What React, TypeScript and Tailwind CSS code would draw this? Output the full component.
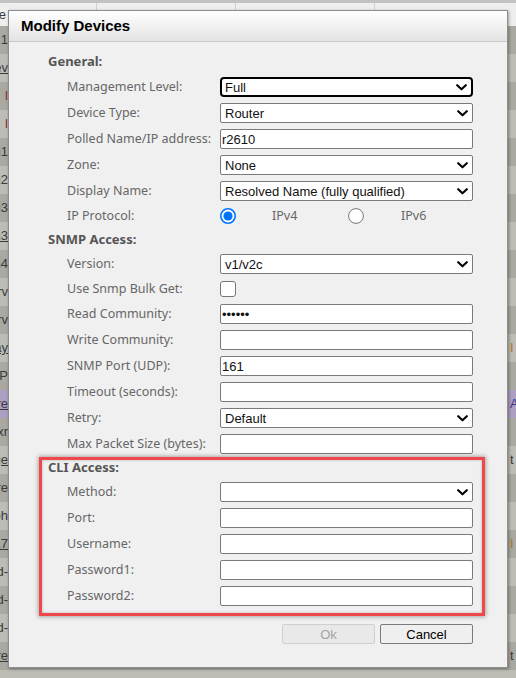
import clsx from "clsx";

type BgRow = {
  left: string;
  right?: string;
  tone: "dark" | "light" | "purple";
  link?: boolean;
  leftColor?: string;
  rightColor?: string;
};

// table rows peeking out behind the modal
const bgRows: BgRow[] = [
  { left: "eth0.1", tone: "dark" },
  { left: "sw-dev", tone: "light", link: true },
  { left: "l", tone: "dark", leftColor: "text-[#8a2b2b]" },
  { left: "l", tone: "light", leftColor: "text-[#8a2b2b]" },
  { left: "cisco-n1", tone: "dark" },
  { left: "cisco-n2", tone: "light" },
  { left: "cisco-n3", tone: "dark" },
  { left: "cisco-n3", tone: "light", link: true },
  { left: "cisco-n4", tone: "dark" },
  { left: "srv", tone: "light" },
  { left: "srv", tone: "dark" },
  { left: "gateway", tone: "light", link: true, right: "I", rightColor: "text-[#b8742a]" },
  { left: "AP", tone: "dark" },
  { left: "core", tone: "purple", link: true, right: "A", rightColor: "text-[#3b3b8a]" },
  { left: "xr", tone: "dark" },
  { left: "edge", tone: "light", link: true, right: "t" },
  { left: "fire", tone: "dark" },
  { left: "oh", tone: "light" },
  { left: "r17", tone: "dark", link: true, right: "I", rightColor: "text-[#b8742a]" },
  { left: "d-", tone: "light" },
  { left: "d-", tone: "dark" },
  { left: "d-", tone: "light" },
  { left: "store", tone: "dark", link: true, right: "t" },
  { left: "", tone: "light" },
];

const toneBg = {
  dark: "bg-[#a9a9a1]",
  light: "bg-[#bdbdb6]",
  purple: "bg-[#ac9fc2]",
};

function Backdrop() {
  return (
    <div className="flex flex-col font-['Liberation_Sans',Arial,sans-serif] text-[13px] text-[#3a3a3a]">
      <div className="h-[3px] bg-[#c2c2c2]" />
      <div className="flex h-[23px] bg-[#eeeeee]">
        <div className="flex w-[97px] items-center justify-end overflow-hidden border-r border-[#cfcfcf] pr-[90px]">
          <span className="whitespace-nowrap">Name</span>
        </div>
        <div className="w-[139px] border-r border-[#cfcfcf]" />
        <div className="w-[139px] border-r border-[#cfcfcf]" />
        <div className="flex-1" />
      </div>
      {bgRows.map((row, i) => (
        <div key={i} className={clsx("flex h-[28px] items-center", toneBg[row.tone])}>
          <div className="flex w-[8px] justify-end overflow-hidden">
            <span className={clsx("whitespace-nowrap", row.link && "underline", row.leftColor)}>{row.left}</span>
          </div>
          <div className="flex-1" />
          <div className="w-[8px] overflow-hidden pl-[2px]">
            <span className={clsx("whitespace-nowrap", row.rightColor)}>{row.right}</span>
          </div>
        </div>
      ))}
    </div>
  );
}

const fieldFont = "font-['Liberation_Sans',Arial,sans-serif] text-[13px] text-[#111]";

function Chevron() {
  return (
    <svg width="11" height="7" viewBox="0 0 11 7" fill="none">
      <path d="M1.2 1.2 L5.5 5.3 L9.8 1.2" stroke="#000" strokeWidth="2.1" strokeLinecap="round" strokeLinejoin="round" />
    </svg>
  );
}

function DropDown({ value, focused }: { value?: string; focused?: boolean }) {
  return (
    <div
      className={clsx(
        "flex h-[20px] w-[253px] items-center justify-between bg-white pr-[4px]",
        fieldFont,
        focused ? "rounded-[4px] border-2 border-black pl-[3px]" : "rounded-[2px] border border-[#7a7a7a] pl-[4px]"
      )}
    >
      <span className="leading-none">{value}</span>
      <Chevron />
    </div>
  );
}

function TextBox({ value, type = "text" }: { value?: string; type?: string }) {
  return (
    <input
      readOnly
      type={type}
      value={value ?? ""}
      className={clsx(
        "h-[20px] w-[253px] rounded-[2px] border border-[#7a7a7a] bg-white px-[1px] outline-none",
        fieldFont
      )}
    />
  );
}

function Radio({ checked }: { checked?: boolean }) {
  return (
    <svg width="16" height="16" viewBox="0 0 16 16">
      {checked ? (
        <>
          <circle cx="8" cy="8" r="7.2" fill="#fff" stroke="#0075ff" strokeWidth="1.6" />
          <circle cx="8" cy="8" r="4.6" fill="#0075ff" />
        </>
      ) : (
        <circle cx="8" cy="8" r="7.4" fill="#fff" stroke="#767676" strokeWidth="1" />
      )}
    </svg>
  );
}

function SectionTitle({ children, h }: { children: string; h: string }) {
  return (
    <div className={clsx("flex items-center text-[13px] font-bold text-[#555]", h)}>{children}</div>
  );
}

function Field({ label, children, h = "h-[26px]" }: { label: string; children: React.ReactNode; h?: string }) {
  return (
    <div className={clsx("flex items-center", h)}>
      <div className="w-[172px] pl-[19px] text-[12.5px] text-[#666]">{label}</div>
      {children}
    </div>
  );
}

export default function App() {
  return (
    <div className="relative h-[678px] w-[516px] overflow-hidden bg-[#bdbdb6]">
      <Backdrop />

      <div className="absolute left-[8px] top-[10px] flex h-[658px] w-[500px] flex-col border border-[#8e8e8e] bg-[#f0f0f0] font-['Noto_Sans','DejaVu_Sans',sans-serif] shadow-[1px_1px_3px_rgba(0,0,0,0.35)]">
        <div className="flex h-[31px] items-center border-b border-[#c9c9c9] bg-gradient-to-b from-white to-[#e3e3e3] pl-[12px]">
          <span className="font-['Liberation_Sans',Arial,sans-serif] text-[15px] font-bold text-black">Modify Devices</span>
        </div>

        <div className="flex flex-col pl-[39px] pr-[34px] pt-[8px]">
          <SectionTitle h="h-[24px]">General:</SectionTitle>
          <Field label="Management Level:">
            <DropDown value="Full" focused />
          </Field>
          <Field label="Device Type:">
            <DropDown value="Router" />
          </Field>
          <Field label="Polled Name/IP address:">
            <TextBox value="r2610" />
          </Field>
          <Field label="Zone:">
            <DropDown value="None" />
          </Field>
          <Field label="Display Name:">
            <DropDown value="Resolved Name (fully qualified)" />
          </Field>
          <Field label="IP Protocol:" h="h-[24px]">
            <div className="flex text-[12.5px] text-[#666]">
              <div className="flex w-[128px] items-center">
                <Radio checked />
                <span className="ml-[36px]">IPv4</span>
              </div>
              <div className="flex items-center">
                <Radio />
                <span className="ml-[37px]">IPv6</span>
              </div>
            </div>
          </Field>

          <SectionTitle h="h-[23px]">SNMP Access:</SectionTitle>
          <Field label="Version:">
            <DropDown value="v1/v2c" />
          </Field>
          <Field label="Use Snmp Bulk Get:" h="h-[24px]">
            <div className="h-[16px] w-[16px] rounded-[3px] border border-[#767676] bg-white" />
          </Field>
          <Field label="Read Community:">
            <TextBox type="password" value="public" />
          </Field>
          <Field label="Write Community:">
            <TextBox />
          </Field>
          <Field label="SNMP Port (UDP):">
            <TextBox value="161" />
          </Field>
          <Field label="Timeout (seconds):">
            <TextBox />
          </Field>
          <Field label="Retry:">
            <DropDown value="Default" />
          </Field>
          <Field label="Max Packet Size (bytes):">
            <TextBox />
          </Field>

          <SectionTitle h="h-[22px]">CLI Access:</SectionTitle>
          <Field label="Method:">
            <DropDown />
          </Field>
          <Field label="Port:">
            <TextBox />
          </Field>
          <Field label="Username:">
            <TextBox />
          </Field>
          <Field label="Password1:">
            <TextBox type="password" />
          </Field>
          <Field label="Password2:">
            <TextBox type="password" />
          </Field>

          <div className="mt-[15px] flex justify-end gap-[5px] font-['Liberation_Sans',Arial,sans-serif] text-[13px]">
            <button
              disabled
              className="h-[20px] w-[93px] rounded-[2px] border border-[#cfcfcf] bg-[#e9e9e9] text-[#a3a3a3]"
            >
              Ok
            </button>
            <button className="h-[20px] w-[93px] rounded-[2px] border border-[#7a7a7a] bg-[#efefef] text-black">
              Cancel
            </button>
          </div>
        </div>
      </div>

      {/* highlight around the CLI settings */}
      <div className="pointer-events-none absolute left-[39px] top-[457px] h-[159px] w-[446px] border-[3px] border-[#f0474a] shadow-[0_0_4px_1px_rgba(0,0,0,0.3),inset_0_0_3px_rgba(0,0,0,0.25)]" />
    </div>
  );
}
